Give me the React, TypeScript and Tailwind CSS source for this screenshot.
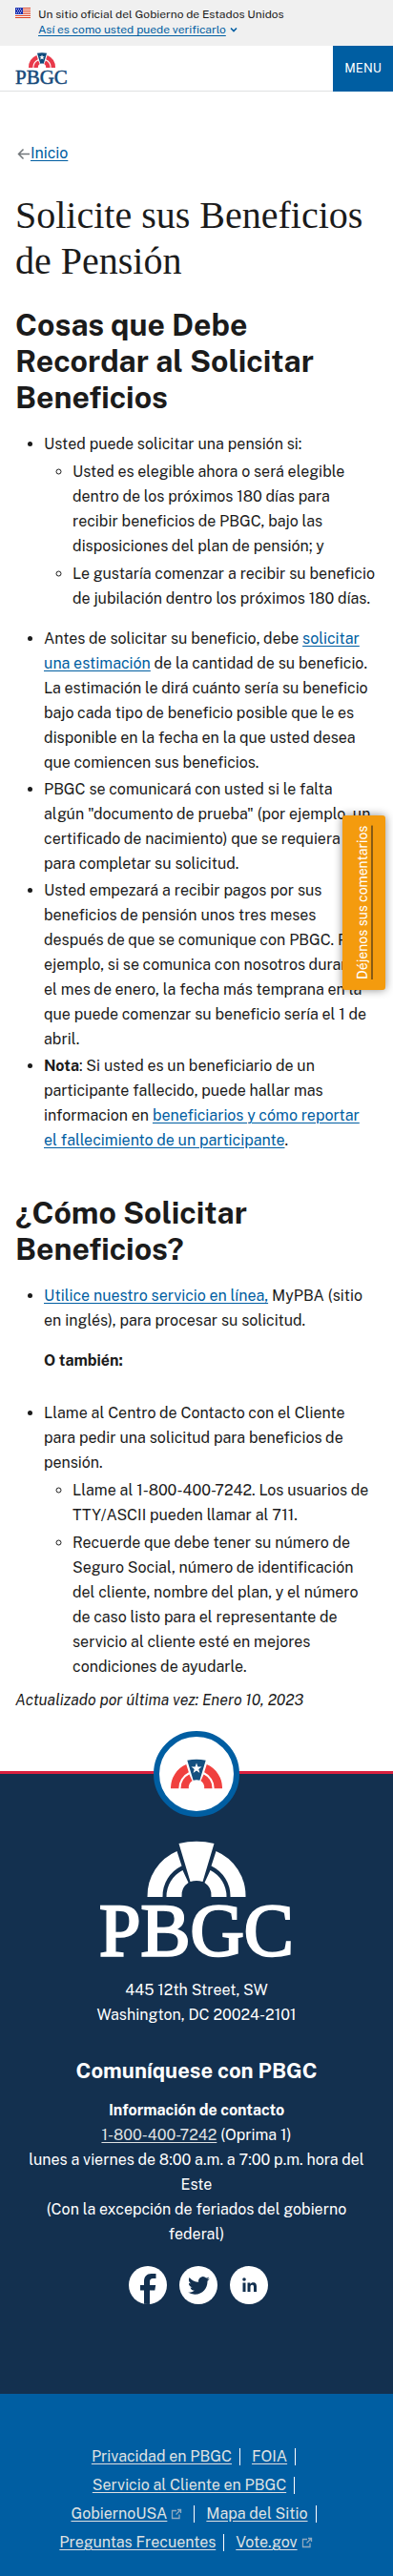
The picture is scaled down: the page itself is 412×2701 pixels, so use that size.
import React from "react";
import type { ReactNode } from "react";

const LINK = "text-[#005ea2] underline underline-offset-2";

function Flag() {
  return (
    <svg viewBox="0 0 16 11" className="mt-2 h-[11px] w-4 shrink-0" aria-hidden="true" shapeRendering="crispEdges">
      <rect width="16" height="11" fill="#fff" />
      {[0, 2, 4, 6, 8, 10].map((y) => (
        <rect key={y} y={y} width="16" height="1" fill="#db3e1f" />
      ))}
      <rect width="8" height="7" fill="#1e33b1" />
      {[1, 3, 5].map((y) =>
        [1, 3, 5].map((x) => <rect key={`${x}-${y}`} x={x + (y === 3 ? 1 : 0)} y={y} width="1" height="1" fill="#c9d0f5" />)
      )}
    </svg>
  );
}

function Arch({ side, center, star, cut }: { side: string; center: string; star?: boolean; cut: string }) {
  return (
    <g>
      <path d="M0 59A51 51 0 0 1 31 11L36 26.500A35 35 0 0 0 16 59Z" fill={side} />
      <path d="M103 59A51 51 0 0 0 72 11L67 26.500A35 35 0 0 1 87 59Z" fill={side} />
      <path d="M20 59A31 31 0 0 1 37 31L43 44A16 16 0 0 0 36 59Z" fill={side} />
      <path d="M83 59A31 31 0 0 0 66 31L60 44A16 16 0 0 1 67 59Z" fill={side} />
      <path d="M33 3Q51.500 -1.500 70 3L58 43Q51.500 41 45 43Z" fill={center} />
      {star && <path d="M51.500 8L54.200 15.500L62 15.700L55.800 20.500L58 28L51.500 23.500L45 28L47.200 20.500L41 15.700L48.800 15.500Z" fill={cut} />}
    </g>
  );
}

function HeaderLogo() {
  return (
    <svg viewBox="0 0 58 40" className="h-10 w-[58px]" role="img" aria-label="PBGC">
      <g transform="translate(14 1) scale(0.272)">
        <Arch side="#e8394a" center="#0f4a7b" star cut="#fff" />
      </g>
      <text x="0" y="34" fontFamily="Liberation Serif, serif" fontSize="21" fill="#15497a" stroke="#15497a" strokeWidth="0.500">
        PBGC
      </text>
    </svg>
  );
}

function FooterLogo() {
  return (
    <svg viewBox="0 0 220 140" className="h-[140px] w-[220px]" role="img" aria-label="PBGC">
      <g transform="translate(58.500 0)">
        <Arch side="#fff" center="#fff" cut="#13304f" />
      </g>
      <text x="110" y="120" textAnchor="middle" fontFamily="Liberation Serif, serif" fontSize="78" fill="#fff" stroke="#fff" strokeWidth="2.500">
        PBGC
      </text>
    </svg>
  );
}

function External() {
  return (
    <svg viewBox="0 0 12 12" className="ml-1 inline-block h-3 w-3" fill="none" stroke="#8fa9bf" strokeWidth="1.300" aria-hidden="true">
      <path d="M6 2.500H1.500V10.500H9V6.500M7 1.500H10.500V5M10.500 1.500L5.500 6.500" />
    </svg>
  );
}

function Social({ label, children }: { label: string; children: ReactNode }) {
  return (
    <a href="#" aria-label={label} className="block size-10 overflow-hidden rounded-full bg-white">
      <svg viewBox="0 0 40 40" className="size-10" fill="#13304f" aria-hidden="true">
        {children}
      </svg>
    </a>
  );
}

function FooterLink({ children, external, last }: { children: ReactNode; external?: boolean; last?: boolean }) {
  return (
    <li className={last ? "flex h-[30px] items-center pr-4" : "flex h-[30px] items-center"}>
      <a href="#" className="text-[#dfe1e2] underline underline-offset-2">
        {children}
      </a>
      {external && <External />}
      {!last && <span className={external ? "ml-3 h-[18px] w-px bg-white" : "ml-2 h-[18px] w-px bg-white"} />}
    </li>
  );
}

function FooterRow({ children }: { children: ReactNode }) {
  return <ul className="flex justify-center gap-3 pr-1.5">{children}</ul>;
}

export default function App() {
  return (
    <div className="relative bg-white font-['Public_Sans','Inter',sans-serif] text-base leading-[26px] text-[#1b1b1b]">
      <section className="flex gap-2 bg-[#f0f0f0] px-4 pb-2 text-xs leading-4">
        <Flag />
        <div className="pt-[7px] pb-px">
          <p>Un sitio oficial del Gobierno de Estados Unidos</p>
          <button type="button" className="flex items-center gap-1 text-[#005ea2]">
            <span className="underline underline-offset-2">Así es como usted puede verificarlo</span>
            <svg viewBox="0 0 8 6" className="h-[6px] w-2" fill="none" stroke="#005ea2" strokeWidth="1.600" aria-hidden="true">
              <path d="M1 1.500L4 4.500L7 1.500" />
            </svg>
          </button>
        </div>
      </section>

      <header className="flex h-12 items-stretch justify-between border-b border-[#dfe1e2] bg-white">
        <a href="#" className="pt-[6px] pl-4">
          <HeaderLogo />
        </a>
        <button type="button" className="-mb-px w-[63px] bg-[#005ea2] text-[13px] text-white">
          MENU
        </button>
      </header>

      <main className="px-4 pt-[52px] pb-8">
        <nav className="flex items-center">
          <svg viewBox="0 0 16 16" className="size-4" fill="none" stroke="#71767a" strokeWidth="1.500" aria-hidden="true">
            <path d="M15 8.500H4M8.500 3.500L3.500 8.500L8.500 13.500" />
          </svg>
          <a href="#" className={LINK}>Inicio</a>
        </nav>

        <h1 className="mt-7 font-['Liberation_Serif',serif] text-[40px] leading-[48px]">Solicite sus Beneficios de Pensión</h1>

        <h2 className="mt-6 text-[32px] leading-[38px] font-bold">
          Cosas que Debe Recordar al Solicitar Beneficios
        </h2>
        <ul className="mt-[17px] list-disc space-y-0.5 pl-[30px]">
          <li>
            Usted puede solicitar una pensión si:
            <ul className="mt-[3px] mb-4 list-[circle] space-y-[3px] pl-[30px]">
              <li>Usted es elegible ahora o será elegible dentro de los próximos 180 días para recibir beneficios de PBGC, bajo las disposiciones del plan de pensión; y</li>
              <li>Le gustaría comenzar a recibir su beneficio de jubilación dentro los próximos 180 días.</li>
            </ul>
          </li>
          <li>
            Antes de solicitar su beneficio, debe <a href="#" className={LINK}>solicitar una estimación</a> de la cantidad de su beneficio. La estimación le dirá cuánto sería su beneficio bajo cada tipo de beneficio posible que le es disponible en la fecha en la que usted desea que comiencen sus beneficios.
          </li>
          <li>PBGC se comunicará con usted si le falta <br />algún "documento de prueba" (por ejemplo, un certificado de nacimiento) que se requiera <br />para completar su solicitud.</li>
          <li>Usted empezará a recibir pagos por sus beneficios de pensión unos tres meses después de que se comunique con PBGC. Por ejemplo, si se comunica con nosotros durante el mes de enero, la fecha más temprana en la que puede comenzar su beneficio sería el 1 de abril.</li>
          <li>
            <strong>Nota</strong>: Si usted es un beneficiario de un participante fallecido, puede hallar mas informacion en <a href="#" className={LINK}>beneficiarios y cómo reportar <br />el fallecimiento de un participante</a>.
          </li>
        </ul>

        <h2 className="mt-11 text-[32px] leading-[38px] font-bold">¿Cómo Solicitar Beneficios?</h2>
        <ul className="mt-[17px] list-disc pl-[30px]">
          <li>
            <a href="#" className={LINK}>Utilice nuestro servicio en línea,</a> MyPBA (sitio en inglés), para procesar su solicitud.
            <p className="mt-4 font-bold">O también:</p>
          </li>
          <li className="mt-[29px]">
            Llame al Centro de Contacto con el Cliente para pedir una solicitud para beneficios de pensión.
            <ul className="mt-[3px] list-[circle] space-y-[3px] pl-[30px]">
              <li>Llame al 1-800-400-7242. Los usuarios de TTY/ASCII pueden llamar al 711.</li>
              <li>Recuerde que debe tener su número de Seguro Social, número de identificación del cliente, nombre del plan, y el número de caso listo para el representante de servicio al cliente esté en mejores condiciones de ayudarle.</li>
            </ul>
          </li>
        </ul>
        <p className="mt-[9px] italic">Actualizado por última vez: Enero 10, 2023</p>
      </main>

      <footer className="text-center text-white">
        <div className="relative mt-[29px] flex flex-col items-center border-t-[3px] border-[#d9213f] bg-[#13304f] px-6 pb-[94px]">
          <div className="-mt-[45px] flex size-[90px] items-center justify-center rounded-full border-[6px] border-[#005ea2] bg-white">
            <svg viewBox="0 0 103 60" className="h-8 w-[54px]" aria-hidden="true">
              <Arch side="#f0403e" center="#14507f" star cut="#fff" />
            </svg>
          </div>
          <div className="mt-[25px]">
            <FooterLogo />
          </div>
          <address className="mt-1 not-italic">
            445 12th Street, SW
            <br />
            Washington, DC 20024-2101
          </address>
          <h3 className="mt-8 text-[22px] font-bold">Comuníquese con PBGC</h3>
          <div className="mt-4">
            <p className="font-bold">Información de contacto</p>
            <p>
              <a href="#" className="text-[#dfe1e2] underline underline-offset-2">1-800-400-7242</a> (Oprima 1)
            </p>
            <p>lunes a viernes de 8:00 a.m. a 7:00 p.m. hora del Este</p>
            <p>(Con la excepción de feriados del gobierno federal)</p>
          </div>
          <div className="mt-5 ml-1 flex gap-[13px]">
            <Social label="Facebook">
              <path d="M16 40V25.500H12V20H16V16C16 11 19 8 23.500 8H28.500V13H25.500C23 13 22 14.200 22 16.500V20H28.200L27.300 25.500H22V40Z" />
            </Social>
            <Social label="Twitter">
              <path transform="translate(9 9) scale(0.950)" d="M23.950 4.570a10 10 0 0 1-2.820.770 4.960 4.960 0 0 0 2.160-2.720c-.950.550-2 .960-3.130 1.180a4.920 4.920 0 0 0-8.380 4.480C7.690 8.090 4.070 6.130 1.640 3.160a4.820 4.820 0 0 0-.670 2.480c0 1.710.870 3.210 2.190 4.100a4.900 4.900 0 0 1-2.230-.620v.060a4.920 4.920 0 0 0 3.950 4.830 5 5 0 0 1-2.210.080 4.940 4.940 0 0 0 4.600 3.420A9.870 9.870 0 0 1 0 19.540a13.990 13.990 0 0 0 7.550 2.210c9.050 0 14-7.500 14-13.980 0-.210 0-.420-.020-.630A9.940 9.940 0 0 0 24 4.590z" />
            </Social>
            <Social label="LinkedIn">
              <circle cx="15" cy="14" r="1.800" />
              <path d="M13.500 17.500H16.500V27H13.500ZM18.500 17.500H21.300V18.900C22 17.800 23.100 17.300 24.300 17.300C27.300 17.300 28 19.200 28 21.800V27H25V22.300C25 20.900 24.800 19.800 23.400 19.800C21.900 19.800 21.500 20.900 21.500 22.300V27H18.500Z" />
            </Social>
          </div>
        </div>
        <nav className="bg-[#005ea2] px-4 pt-[51px] pb-[21px]">
          <FooterRow>
            <FooterLink>Privacidad en PBGC</FooterLink>
            <FooterLink>FOIA</FooterLink>
          </FooterRow>
          <FooterRow>
            <FooterLink>Servicio al Cliente en PBGC</FooterLink>
          </FooterRow>
          <FooterRow>
            <FooterLink external>GobiernoUSA</FooterLink>
            <FooterLink>Mapa del Sitio</FooterLink>
          </FooterRow>
          <FooterRow>
            <FooterLink>Preguntas Frecuentes</FooterLink>
            <FooterLink external last>Vote.gov</FooterLink>
          </FooterRow>
        </nav>
      </footer>

      <a
        href="#"
        className="absolute top-[855px] right-2 flex h-[183px] w-[45px] rotate-180 items-center justify-center rounded-[3px] bg-[#f49b0e] pl-1 text-sm text-white underline decoration-[#1b1b1b] underline-offset-2 shadow-[0_0_10px_rgba(0,0,0,0.45)] [writing-mode:vertical-rl]"
      >
        Déjenos sus comentarios
      </a>
    </div>
  );
}
